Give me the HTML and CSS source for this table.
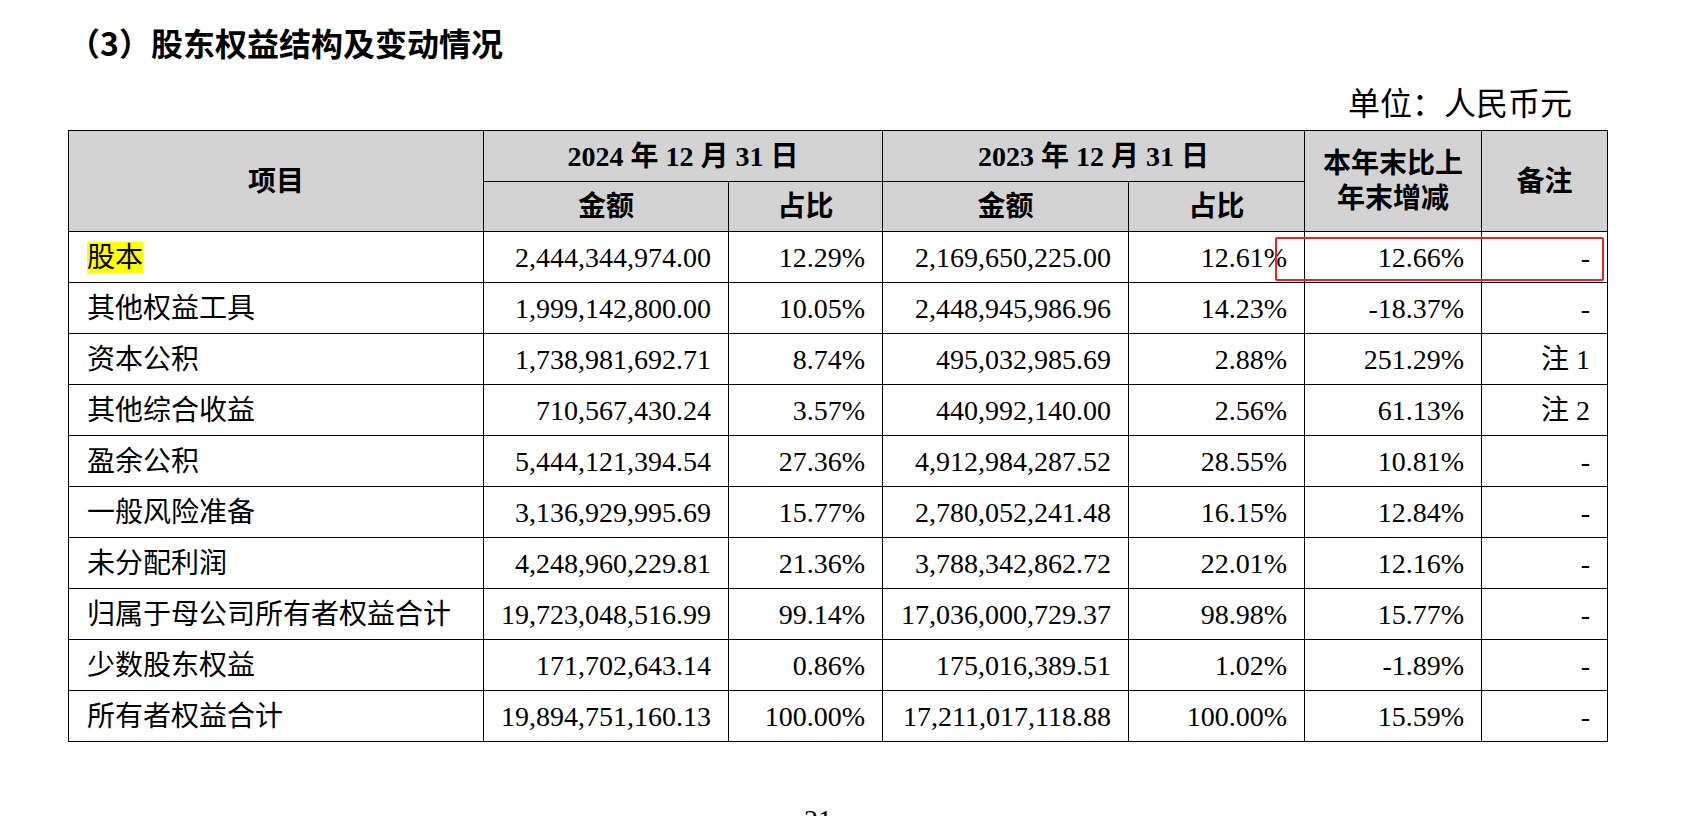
FILE: index.html
```html
<!DOCTYPE html>
<html lang="zh-CN">
<head>
<meta charset="utf-8">
<title>股东权益结构及变动情况</title>
<link rel="stylesheet" href="styles.css">
</head>
<body>
<div class="page">
  <h1 class="title">（3）股东权益结构及变动情况</h1>
  <div class="unit">单位：人民币元</div>
  <div class="table-wrap">
    <table class="equity">
      <colgroup>
        <col class="c-item"><col class="c-amt1"><col class="c-pct1"><col class="c-amt2"><col class="c-pct2"><col class="c-chg"><col class="c-note">
      </colgroup>
      <thead>
        <tr class="h1">
          <th rowspan="2">项目</th>
          <th colspan="2">2024 年 12 月 31 日</th>
          <th colspan="2">2023 年 12 月 31 日</th>
          <th rowspan="2" class="two-line">本年末比上<br>年末增减</th>
          <th rowspan="2">备注</th>
        </tr>
        <tr class="h2">
          <th>金额</th>
          <th>占比</th>
          <th>金额</th>
          <th>占比</th>
        </tr>
      </thead>
      <tbody>
        <tr><td><span class="hl">股本</span></td><td>2,444,344,974.00</td><td>12.29%</td><td>2,169,650,225.00</td><td>12.61%</td><td>12.66%</td><td>-</td></tr>
        <tr><td>其他权益工具</td><td>1,999,142,800.00</td><td>10.05%</td><td>2,448,945,986.96</td><td>14.23%</td><td>-18.37%</td><td>-</td></tr>
        <tr><td>资本公积</td><td>1,738,981,692.71</td><td>8.74%</td><td>495,032,985.69</td><td>2.88%</td><td>251.29%</td><td>注 1</td></tr>
        <tr><td>其他综合收益</td><td>710,567,430.24</td><td>3.57%</td><td>440,992,140.00</td><td>2.56%</td><td>61.13%</td><td>注 2</td></tr>
        <tr><td>盈余公积</td><td>5,444,121,394.54</td><td>27.36%</td><td>4,912,984,287.52</td><td>28.55%</td><td>10.81%</td><td>-</td></tr>
        <tr><td>一般风险准备</td><td>3,136,929,995.69</td><td>15.77%</td><td>2,780,052,241.48</td><td>16.15%</td><td>12.84%</td><td>-</td></tr>
        <tr><td>未分配利润</td><td>4,248,960,229.81</td><td>21.36%</td><td>3,788,342,862.72</td><td>22.01%</td><td>12.16%</td><td>-</td></tr>
        <tr><td>归属于母公司所有者权益合计</td><td>19,723,048,516.99</td><td>99.14%</td><td>17,036,000,729.37</td><td>98.98%</td><td>15.77%</td><td>-</td></tr>
        <tr><td>少数股东权益</td><td>171,702,643.14</td><td>0.86%</td><td>175,016,389.51</td><td>1.02%</td><td>-1.89%</td><td>-</td></tr>
        <tr><td>所有者权益合计</td><td>19,894,751,160.13</td><td>100.00%</td><td>17,211,017,118.88</td><td>100.00%</td><td>15.59%</td><td>-</td></tr>
      </tbody>
    </table>
    <div class="mark"></div>
  </div>
  <div class="pageno">21</div>
</div>
</body>
</html>
```
FILE: styles.css
```css
html, body {
  margin: 0;
  padding: 0;
  background: #ffffff;
}

body {
  width: 1697px;
  height: 816px;
  overflow: hidden;
  color: #000000;
  font-family: "Liberation Serif", "Noto Sans CJK SC", serif;
}

.page {
  display: flex;
  flex-direction: column;
  padding-left: 68px;
  width: 1539px;
}

.title {
  margin: 22px 0 0 0;
  height: 40px;
  font-family: "Noto Sans CJK SC", sans-serif;
  font-size: 32px;
  line-height: 40px;
  font-weight: 700;
}

.unit {
  margin-top: 19px;
  height: 40px;
  padding-right: 35px;
  text-align: right;
  font-family: "Noto Sans CJK SC", sans-serif;
  font-size: 32px;
  line-height: 40px;
  font-weight: 400;
}

.table-wrap {
  position: relative;
  margin-top: 9px;
  width: 1539px;
}

.equity {
  border-collapse: collapse;
  table-layout: fixed;
  width: 1539px;
  font-size: 28px;
  line-height: 31px;
}

.c-item { width: 415px; }
.c-amt1 { width: 245px; }
.c-pct1 { width: 154px; }
.c-amt2 { width: 246px; }
.c-pct2 { width: 176px; }
.c-chg  { width: 177px; }
.c-note { width: 126px; }

.equity th,
.equity td {
  border: 1px solid #000000;
  padding: 0 17px;
  vertical-align: middle;
  white-space: nowrap;
}

.equity th {
  background: #d3d3d3;
  font-weight: 700;
  text-align: center;
  padding: 0;
}

.equity tr.h1 { height: 51px; }
.equity tr.h2 { height: 50px; }

.equity th.two-line {
  line-height: 35px;
}

.equity tbody tr { height: 51px; }

.equity td {
  text-align: right;
}

.equity td:first-child {
  text-align: left;
  padding-left: 18px;
}

.hl {
  background: #ffff00;
}

.mark {
  position: absolute;
  left: 1207px;
  top: 107px;
  width: 325px;
  height: 40px;
  border: 2px solid #ee2222;
  border-radius: 2px;
}

.pageno {
  margin-top: 64px;
  padding-left: 736px;
  font-size: 28px;
  line-height: 28px;
}
```
